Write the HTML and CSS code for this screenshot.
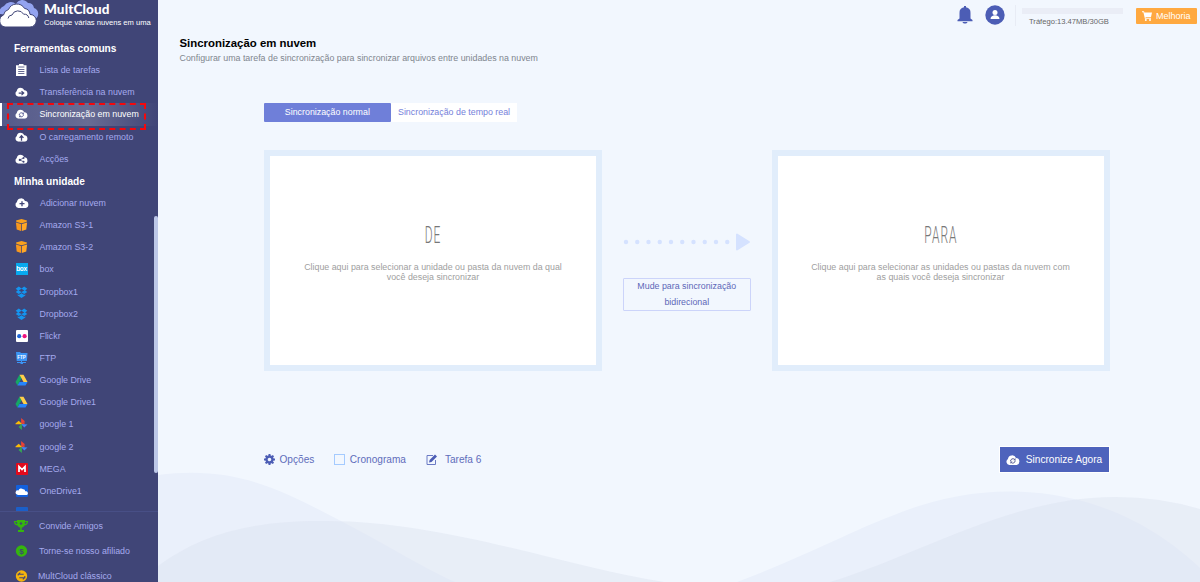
FILE: index.html
```html
<!DOCTYPE html>
<html lang="pt">
<head>
  <meta charset="UTF-8">
  <meta name="viewport" content="width=device-width, initial-scale=1.0">
  <title>MultCloud - Sincronização em nuvem</title>
  <link rel="stylesheet" href="styles.css">
</head>
<body>
  <!-- Ícones reutilizados -->
  <svg class="defs" width="0" height="0">
    <symbol id="cloud" viewBox="0 0 14 10"><path fill="#fff" d="M3.4 10A3.3 3.3 0 0 1 1.9 4 4.2 4.2 0 0 1 10 3.1 3.5 3.5 0 0 1 10.7 10z"/></symbol>
    <symbol id="sync" viewBox="0 0 14 10"><use href="#cloud"/><path d="M4.5 6.2A2.5 2.5 0 0 1 8.6 4.3M9.2 5.5A2.5 2.5 0 0 1 5.2 7.6" fill="none" stroke="#555a93" stroke-width="1"/><path d="M9.5 3v2.2H7.3zM4.400 8.800V6.600h2.200z" fill="#555a93"/></symbol>
    <symbol id="s3" viewBox="0 0 12 12"><path d="M6 0 11.5 1.6 11 3 6 4.3 1 3 .5 1.6z" fill="#f9a11d"/><path d="M.4 3.4 5.6 4.9V12L1.2 10.6z" fill="#f7981f"/><path d="M11.6 3.4 6.4 4.9V12l4.400-1.400z" fill="#ffa726"/></symbol>
    <symbol id="dropbox" viewBox="0 0 12 12"><path fill="#1495f0" d="M3.300.6 6 2.500 8.700.6 11.800 2.700 9.700 4.400l2.100 1.700L8.700 8.100 6 6.200 3.300 8.100.2 6.100l2.100-1.700L.2 2.700zM2.200 8.300l1.100.7L6 7.200 8.700 9l1.100-.7v1.300L6 11.900 2.200 9.600z"/><path fill="#404577" d="M6 2.800 8.800 4.400 6 6 3.200 4.400z"/></symbol>
    <symbol id="drive" viewBox="0 0 12 12"><path fill="#16a765" d="M4 .8 0 8l2 3.600L6 4.300z"/><path fill="#ffcf48" d="M4 .8h4L12 8H8z"/><path fill="#2684fc" d="M4 8h8l-2 3.600H2z"/></symbol>
    <symbol id="photos" viewBox="0 0 12 12"><path fill="#ea4335" d="M5.600 0 9.400 3.200 6 6H5.600z"/><path fill="#4285f4" d="M12 6.400 8.800 9.600 6 6.400V6z"/><path fill="#ea4335" d="M6 6 9 3.500V6z"/><path fill="#34a853" d="M6.400 12 3 9 6 6h.4z"/><path fill="#fbbc05" d="M0 5.600 3.200 2.800 6 5.600V6.300H0z"/></symbol>
  </svg>

  <div class="app">
    <aside class="sidebar">
      <div class="logo">
        <svg width="40" height="28" viewBox="0 0 40 28">
          <path fill="#93a3f0" d="M1 14A6 6 0 0 1 5 6 8 8 0 0 1 17 4 7 7 0 0 1 29 3a6 6 0 0 1 6 5 6 6 0 0 1 1 11L25 17z"/>
          <path fill="#fff" stroke="#404577" stroke-width="1" d="M6 27A6.300 6.300 0 0 1 4.500 15 7 7 0 0 1 9.500 9.500 9 9 0 0 1 25.500 8.400a6.500 6.500 0 0 1 5.500 6A6.300 6.300 0 0 1 31 27z"/>
          <path fill="none" stroke="#404577" stroke-width="1" d="M9 18.500a4.200 4.200 0 0 1 4-3.500 6.400 6.400 0 0 1 11.600-.8 4.800 4.800 0 0 1 5.200 3.800"/>
        </svg>
        <div class="logo-text">
          <div class="brand">MultCloud</div>
          <div class="tagline">Coloque várias nuvens em uma</div>
        </div>
      </div>

      <div class="menu">
        <h3>Ferramentas comuns</h3>
        <a class="item"><svg width="13" height="12" viewBox="0 0 13 12"><path fill="#fff" d="M1 1.200h3V0h4.500v1.200h3V12H1z"/><path d="M3.200 3h6.200M3.200 5.500h6.200M3.200 7.500h6.200M3.200 9.500h6.200" stroke="#404577" stroke-width=".8"/></svg>Lista de tarefas</a>
        <a class="item"><svg width="13" height="10" viewBox="0 0 14 10"><use href="#cloud"/><path d="M4 6.200h5M7 4l2.400 2.200L7 8.400" fill="none" stroke="#404577" stroke-width="1.300"/></svg>Transferência na nuvem</a>
        <a class="item active"><svg width="13" height="10"><use href="#sync"/></svg>Sincronização em nuvem</a>
        <a class="item"><svg width="13" height="10" viewBox="0 0 14 10"><use href="#cloud"/><path d="M7 9V4.500M4.900 6 7 3.700 9.100 6" fill="none" stroke="#404577" stroke-width="1.400"/></svg>O carregamento remoto</a>
        <a class="item"><svg width="13" height="10" viewBox="0 0 14 10"><use href="#cloud"/><path d="M9.200 4 5.200 6l4 2" fill="none" stroke="#404577" stroke-width=".8"/><g fill="#404577"><circle cx="9.200" cy="4" r="1.100"/><circle cx="5.200" cy="6" r="1.200"/><circle cx="9.200" cy="8" r="1.100"/></g></svg>Acções</a>
        <h3>Minha unidade</h3>
        <a class="item add"><svg width="14" height="10" viewBox="0 0 14 10"><use href="#cloud"/><path d="M7 3.200v5M4.500 5.700h5" stroke="#404577" stroke-width="1.300"/></svg>Adicionar nuvem</a>
        <a class="item"><svg width="13" height="12"><use href="#s3"/></svg>Amazon S3-1</a>
        <a class="item"><svg width="13" height="12"><use href="#s3"/></svg>Amazon S3-2</a>
        <a class="item"><span class="box-icon">box</span>box</a>
        <a class="item"><svg width="13" height="12"><use href="#dropbox"/></svg>Dropbox1</a>
        <a class="item"><svg width="13" height="12"><use href="#dropbox"/></svg>Dropbox2</a>
        <a class="item"><svg width="13" height="12" viewBox="0 0 13 12"><rect x="1" width="12" height="12" rx="1" fill="#fff"/><circle cx="4.200" cy="6.200" r="2.100" fill="#1f67d8"/><circle cx="9.600" cy="6.200" r="2.100" fill="#f0147e"/></svg>Flickr</a>
        <a class="item"><svg width="13" height="12" viewBox="0 0 13 12"><path fill="#3b94f5" d="M1 0h4l1 1h6.500l-.6 8H1.700zM6 9h1v1h4v1H8v1H5.500v-1H2v-1h4z"/><text x="2.200" y="6.900" class="ftp">FTP</text></svg>FTP</a>
        <a class="item"><svg width="13" height="12"><use href="#drive"/></svg>Google Drive</a>
        <a class="item"><svg width="13" height="12"><use href="#drive"/></svg>Google Drive1</a>
        <a class="item"><svg width="13" height="12"><use href="#photos"/></svg>google 1</a>
        <a class="item"><svg width="13" height="12"><use href="#photos"/></svg>google 2</a>
        <a class="item"><svg width="13" height="12" viewBox="0 0 13 12"><rect x="1" width="12" height="12" rx="1" fill="#e20a1c"/><path d="M4 9V3.500l3 3 3-3V9" fill="none" stroke="#fff" stroke-width="1.700"/></svg>MEGA</a>
        <a class="item"><svg width="13" height="12" viewBox="0 0 13 12"><rect x="1" width="12" height="12" rx="1" fill="#1360dd"/><path fill="#fff" d="M2 9.500a2 2 0 0 1 1.500-4A2.600 2.600 0 0 1 8 4.300a2 2 0 0 1 2.200 2 2 2 0 0 1 1.500 3.700H3z"/></svg>OneDrive1</a>
        <a class="item"><svg width="13" height="12" viewBox="0 0 13 12"><rect x="1" width="12" height="12" rx="1" fill="#1b5fc9"/></svg></a>
      </div>

      <div class="links">
        <a><svg width="14" height="12" viewBox="0 0 14 12"><path fill="#35b50d" d="M3 0h8v1h3c0 3-1 4-3.500 4.500C9.700 7 8.500 7.500 7.700 7.800V10H10v2H4v-2h2.300V7.800C5.500 7.500 4.300 7 3.500 5.500 1 5 0 4 0 1h3z"/><path fill="#404577" d="M1.200 2H3l.3 2C2 3.700 1.400 3 1.200 2zM12.800 2H11l-.3 2c1.300-.3 1.900-1 2.100-2zM7 2l1.500 1.500L7 5 5.500 3.500z"/></svg>Convide Amigos</a>
        <a><svg width="14" height="12" viewBox="0 0 14 12"><circle cx="7.500" cy="6" r="5.700" fill="#35b50d"/><text x="5.300" y="8.900" class="dollar">$</text></svg>Torne-se nosso afiliado</a>
        <a><svg width="14" height="12" viewBox="0 0 14 12"><circle cx="7.500" cy="6" r="5.700" fill="#f5b40c"/><path d="M4.200 5.500V4.200h5.500M10.800 6v1.800H5.300M6.300 2.700 4.600 4.200M8.800 9.300l1.700-1.500" fill="none" stroke="#404577" stroke-width="1.100"/></svg>MultCloud clássico</a>
      </div>
      <div class="scrollbar"></div>
      <div class="highlight"></div>
    </aside>

    <main class="main">
      <svg class="waves" width="1042" height="112" viewBox="158 470 1042 112">
        <path fill="#eaf0fb" d="M158 475C238 465 285 492 339 520S425 569 455 582H158z"/>
        <path fill="#eaf0fb" d="M737 582C803 557 850 532 889 517Q950 491.500 1009 491.500C1098 492 1160 530 1200 568V582z"/>
        <path fill="#dbe2f0" fill-opacity=".45" d="M158 566C200 535 250 521 319 521 440 519 570 568 664 582H158zM830 582C920 555 1010 497 1115 497Q1160 497 1200 509V582z"/>
      </svg>

      <header class="topbar">
        <svg class="bell" width="16" height="18" viewBox="0 0 16 18"><path fill="#4c5db5" d="M7 0h2v1.200A5.600 5.600 0 0 1 13.500 7v5.500l2 1.500v1.200H.5V14l2-1.500V7A5.600 5.600 0 0 1 7 1.200zM5.500 16h5C10 18 6 18 5.500 16z"/></svg>
        <svg class="user" width="20" height="20" viewBox="0 0 20 20"><circle cx="10" cy="10" r="9.700" fill="#4c5db5"/><circle cx="10" cy="7.400" r="2.500" fill="#fff"/><path fill="#fff" d="M5.500 14c0-5 9-5 9 0z"/></svg>
        <div class="traffic">
          <div class="bar"></div>
          <span>Tráfego:13.47MB/30GB</span>
        </div>
        <button class="upgrade"><svg width="10" height="10" viewBox="0 0 10 10"><path fill="#fff" d="M0 .3h2L2.400 1.500H10L9 6H3.500l.2.800H9v.9H2.900L1.400 1.200H0z"/><circle cx="3.800" cy="8.900" r="1" fill="#fff"/><circle cx="8" cy="8.900" r="1" fill="#fff"/></svg>Melhoria</button>
      </header>

      <div class="page-title">
        <h1>Sincronização em nuvem</h1>
        <p>Configurar uma tarefa de sincronização para sincronizar arquivos entre unidades na nuvem</p>
      </div>

      <section class="content">
        <div class="tabs">
          <div class="tab selected">Sincronização normal</div>
          <div class="tab">Sincronização de tempo real</div>
        </div>

        <div class="panels">
          <div class="panel">
            <h2>DE</h2>
            <p>Clique aqui para selecionar a unidade ou pasta da nuvem da qual<br>você deseja sincronizar</p>
          </div>
          <div class="direction">
            <svg width="128" height="18" viewBox="0 0 128 18">
              <path d="M3 9H107" stroke="#d5e2ff" stroke-width="4.400" stroke-linecap="round" stroke-dasharray="0 11.250"/>
              <path d="M114 1.500v15L126 9z" fill="#d5e2ff" stroke="#d5e2ff" stroke-width="2" stroke-linejoin="round"/>
            </svg>
            <button class="switch">Mude para sincronização<br>bidirecional</button>
          </div>
          <div class="panel">
            <h2>PARA</h2>
            <p>Clique aqui para selecionar as unidades ou pastas da nuvem com<br>as quais você deseja sincronizar</p>
          </div>
        </div>

        <div class="actions">
          <span class="option"><svg width="11" height="11" viewBox="0 0 11 11"><circle cx="5.500" cy="5.500" r="3" fill="none" stroke="#4c5db5" stroke-width="2.400"/><path d="M5.500 0v2M5.500 9v2M0 5.500h2M9 5.500h2M1.600 1.600 3 3M8 8l1.400 1.400M1.600 9.400 3 8M8 3l1.400-1.400" stroke="#4c5db5" stroke-width="2"/></svg>Opções</span>
          <span class="option schedule"><i class="check"></i>Cronograma</span>
          <span class="option task"><svg width="12" height="11" viewBox="0 0 12 11"><path d="M7 1.500H1v9h8.500V6" fill="none" stroke="#6b7ac4" stroke-width="1"/><path d="M3 8.500 3.600 6 9 .6 11 2.500 5.500 8z" fill="#4c5db5"/></svg>Tarefa 6</span>
          <button class="sync-now"><svg width="14" height="10"><use href="#sync"/></svg>Sincronize Agora</button>
        </div>
      </section>
    </main>
  </div>
</body>
</html>
```
FILE: styles.css
```css
* {
  box-sizing: border-box;
}
body {
  margin: 0;
  font-family: "Liberation Sans", Arial, sans-serif;
  font-size: 8.85px;
  overflow: hidden;
}
h1, h2, h3, p {
  margin: 0;
}
svg {
  display: block;
  flex-shrink: 0;
}
button {
  font-family: inherit;
  border: none;
  padding: 0;
  cursor: pointer;
}
.defs {
  position: absolute;
}
.app {
  display: flex;
  height: 582px;
  overflow: hidden;
}

/* Barra lateral */
.sidebar {
  position: relative;
  width: 158px;
  flex-shrink: 0;
  background: #404577;
  color: #a5aaee;
}
.logo {
  display: flex;
  height: 37px;
  color: #fff;
}
.logo svg {
  margin-left: -1px;
}
.logo-text {
  padding: 1px 0 0 5px;
  white-space: nowrap;
}
.brand {
  font-family: Lato, sans-serif;
  font-size: 13.5px;
  font-weight: 900;
  letter-spacing: 0.15px;
  line-height: 16px;
}
.tagline {
  font-size: 7.6px;
  line-height: 12px;
}
.menu {
  height: 474px;
  overflow: hidden;
}
.menu h3 {
  height: 22.15px;
  line-height: 23.5px;
  padding-left: 14px;
  font-size: 10.15px;
  color: #fff;
}
.item {
  height: 22.15px;
  padding-left: 14.5px;
  display: flex;
  align-items: center;
  gap: 12px;
}
.item.add {
  padding-left: 15px;
  gap: 11px;
}
.item.active {
  color: #fff;
  border-left: 2px solid #fff;
  padding-left: 12.5px;
  background: linear-gradient(90deg, #555a8b, #686c94 55%, #404577);
}
.box-icon {
  width: 12px;
  height: 12px;
  margin-left: 1px;
  background: #08a9ef;
  color: #fff;
  font-size: 6.5px;
  line-height: 11px;
  font-weight: bold;
  text-align: center;
  letter-spacing: -0.3px;
}
.ftp {
  font-size: 4.5px;
  font-weight: bold;
  fill: #fff;
}
.links {
  border-top: 1px solid #484f86;
  padding-top: 2px;
}
.links a {
  display: flex;
  align-items: center;
  height: 24.7px;
  padding-left: 14px;
  gap: 11px;
}
.links a:last-child {
  gap: 10px;
}
.dollar {
  font-size: 8px;
  font-weight: bold;
  fill: #404577;
}
.scrollbar {
  position: absolute;
  right: 0;
  top: 216px;
  width: 4px;
  height: 257px;
  border-radius: 2px;
  background: #bdc8e8;
}
.highlight {
  position: absolute;
  left: 7px;
  top: 103px;
  width: 139px;
  height: 27px;
  border: 2px dashed #f5080c;
}

/* Área principal */
.main {
  position: relative;
  flex: 1;
  background: #f2f7fe;
}
.waves {
  position: absolute;
  left: 0;
  bottom: 0;
}
.topbar {
  position: relative;
  height: 36px;
  padding: 5px 3px 0 0;
  display: flex;
  justify-content: flex-end;
  align-items: flex-start;
}
.bell {
  margin: 1px 12px 0 0;
}
.user {
  margin-right: 10px;
}
.traffic {
  width: 109px;
  height: 21px;
  margin-right: 12px;
  padding: 3px 1px 0 6px;
  border-left: 1px solid #e8ecf5;
  font-size: 7.6px;
  color: #666;
}
.bar {
  height: 6px;
  background: #eaedf6;
}
.traffic span {
  display: block;
  margin: 3px 0 0 7px;
}
.upgrade {
  width: 61px;
  height: 16px;
  margin-top: 3px;
  display: flex;
  align-items: center;
  justify-content: center;
  gap: 3.5px;
  background: #ffa940;
  color: #fff;
  font-size: 9px;
  border-radius: 1px;
}
.page-title {
  position: relative;
  padding-left: 21.5px;
}
.page-title h1 {
  font-size: 11.4px;
  line-height: 14px;
  color: #000;
}
.page-title p {
  margin-top: 3px;
  line-height: 11px;
  color: #7f868e;
}
.content {
  position: relative;
  padding: 39px 90.5px 0 106px;
}
.tabs {
  display: flex;
}
.tab {
  width: 126.7px;
  height: 19px;
  line-height: 19.5px;
  text-align: center;
  background: #fff;
  color: #7581da;
}
.tab.selected {
  background: #6f7fd9;
  color: #fff;
  border-radius: 1px;
}
.panels {
  display: flex;
  justify-content: space-between;
  margin-top: 28px;
}
.panel {
  width: 338px;
  height: 221px;
  padding-top: 66px;
  background: #fff;
  border: 6px solid #e1edfb;
  text-align: center;
  color: #a0a0a0;
}
.panel h2 {
  font-family: Roboto, sans-serif;
  font-weight: 300;
  font-size: 23px;
  line-height: 28px;
  letter-spacing: 2px;
  color: #777;
  transform: scaleX(0.52);
}
.panel p {
  margin-top: 12px;
  line-height: 10px;
}
.direction {
  width: 128px;
  padding-top: 83px;
}
.switch {
  width: 128px;
  height: 33px;
  margin-top: 27px;
  border: 1px solid #ccd4fa;
  border-radius: 1px;
  background: transparent;
  color: #5d67b8;
  font-size: 8.85px;
  line-height: 15.5px;
}
.actions {
  display: flex;
  align-items: center;
  margin-top: 75px;
  font-size: 10.1px;
  color: #5f6dbb;
}
.option {
  display: flex;
  align-items: center;
  gap: 4.5px;
}
.schedule {
  margin-left: 20px;
}
.check {
  width: 11px;
  height: 11px;
  border: 1px solid #a5cbff;
}
.task {
  margin-left: 20px;
  gap: 7px;
}
.sync-now {
  display: flex;
  align-items: center;
  justify-content: center;
  gap: 6px;
  width: 111px;
  height: 27px;
  margin-left: auto;
  border: 1px solid #fff;
  background: #4e63bc;
  color: #fff;
  font-size: 10.1px;
}
```
